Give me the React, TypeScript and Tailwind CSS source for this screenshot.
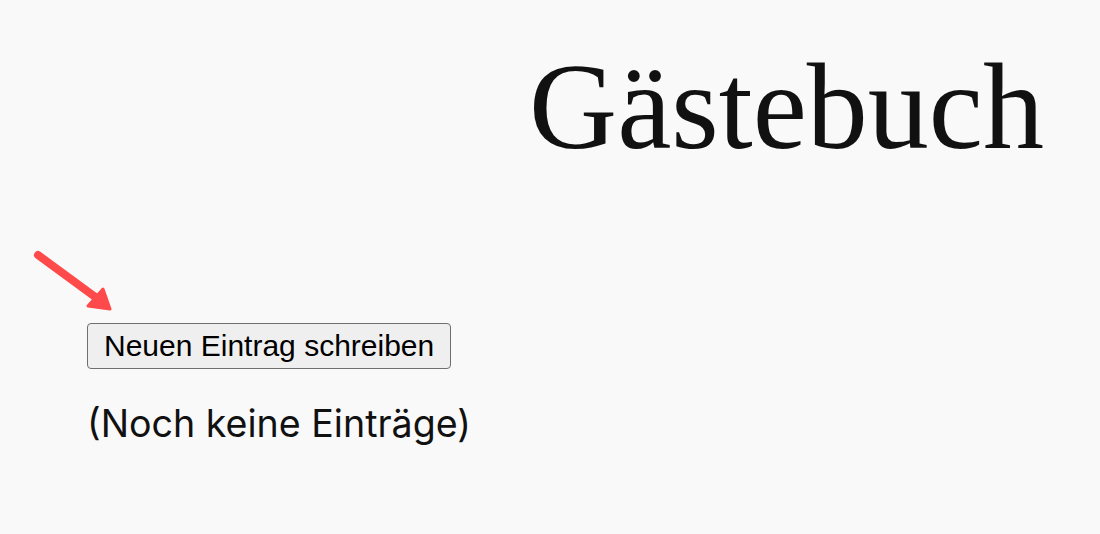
export default function App() {
  return (
    <div className="min-h-[534px] w-full bg-[#f9f9f9] text-[#111]">
      <header className="flex justify-end pr-[56px] pt-[46px]">
        <h1 className="text-[122px] leading-none font-normal text-[#111] [font-family:'Liberation_Serif','Times_New_Roman',serif]">
          Gästebuch
        </h1>
      </header>

      <main className="pl-[87px] pt-[155px]">
        <div className="relative">
          <svg
            className="absolute left-[-57px] top-[-78px]"
            width="90"
            height="70"
            viewBox="0 0 90 70"
            fill="none"
          >
            <path
              d="M8 10 L68 54"
              stroke="#fe4a4b"
              strokeWidth="8"
              strokeLinecap="round"
            />
            <path
              d="M58 61 L73 44 L80 64 Z"
              fill="#fe4a4b"
              stroke="#fe4a4b"
              strokeWidth="3"
              strokeLinejoin="round"
            />
          </svg>
          <button className="h-[46px] rounded-[4px] border border-[#6f6f6f] bg-[#efefef] px-[16px] text-[30px] leading-none text-black [font-family:'Liberation_Sans',Arial,sans-serif]">
            Neuen Eintrag schreiben
          </button>
        </div>
        <p className="mt-[32px] text-[37.6px] leading-[46px] text-[#111] [font-family:Inter,'Noto_Sans',sans-serif]">
          (Noch keine Einträge)
        </p>
      </main>
    </div>
  );
}
